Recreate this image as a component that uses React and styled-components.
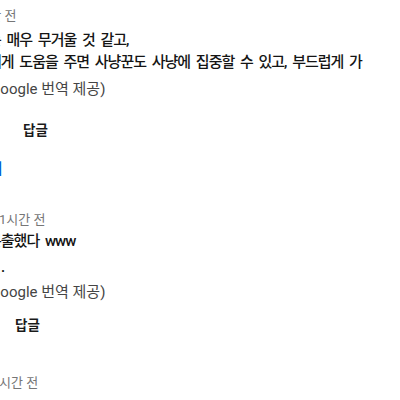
import React from 'react'
import styled, { createGlobalStyle } from 'styled-components'

const GlobalStyle = createGlobalStyle`
  html, body {
    margin: 0;
    padding: 0;
    background: #ffffff;
  }
  body {
    overflow: hidden;
    font-family: Roboto, "Noto Sans CJK KR", sans-serif;
  }
`

const Thread = styled.div`
  width: 400px;
  height: 400px;
  overflow: hidden;
  display: flex;
  flex-direction: column;
  padding-top: 6px;
  box-sizing: border-box;
`

const Comment = styled.div`
  display: flex;
  flex-direction: column;
  flex-shrink: 0;
  margin-top: ${p => p.$top || 0}px;
`

const Meta = styled.div`
  font-size: 13px;
  line-height: 20px;
  color: #767676;
  white-space: nowrap;
  margin-left: ${p => p.$shift}px;
`

const Body = styled.div`
  font-size: 15px;
  font-weight: 500;
  letter-spacing: -1px;
  word-spacing: 3px;
  line-height: ${p => p.$lh || 22}px;
  color: #151515;
  white-space: nowrap;
  margin-top: ${p => p.$top}px;
  margin-left: -12px;
`

const Line = styled.div`
  padding-left: ${p => p.$indent || 0}px;
`

const Translated = styled.div`
  font-size: 15px;
  line-height: 20px;
  color: #454545;
  white-space: nowrap;
  margin-top: ${p => p.$top}px;
  margin-left: -15px;
`

const Actions = styled.div`
  display: flex;
  align-items: center;
  height: 36px;
  margin-top: ${p => p.$top}px;
  padding-left: ${p => p.$indent}px;
`

const ReplyButton = styled.button`
  border: 0;
  background: none;
  padding: 0;
  font-family: Roboto, "Noto Sans CJK KR", sans-serif;
  font-size: 13.5px;
  font-weight: 700;
  line-height: 18px;
  color: #1a1a1a;
`

const RepliesToggle = styled.div`
  display: flex;
  align-items: center;
  height: 36px;
  margin-top: ${p => p.$top}px;
  margin-left: -11.5px;
  font-size: 15px;
  font-weight: 700;
  color: #065fd4;
  white-space: nowrap;
`

export default function App() {
  return (
    <>
      <GlobalStyle />
      <Thread>
        <Comment>
          <Meta $shift={-30}>1시간 전</Meta>
          <Body $top={3}>
            <Line>는 매우 무거울 것 같고,</Line>
            <Line>에게 도움을 주면 사냥꾼도 사냥에 집중할 수 있고, 부드럽게 가</Line>
          </Body>
          <Translated $top={6}>(Google 번역 제공)</Translated>
          <Actions $top={13} $indent={23}>
            <ReplyButton>답글</ReplyButton>
          </Actions>
          <RepliesToggle $top={1}>개</RepliesToggle>
        </Comment>

        <Comment $top={25}>
          <Meta $shift={-1}>1시간 전</Meta>
          <Body $top={-2} $lh={26}>
            <Line>분출했다 www</Line>
            <Line $indent={13}>.</Line>
          </Body>
          <Translated $top={2}>(Google 번역 제공)</Translated>
          <Actions $top={5} $indent={15}>
            <ReplyButton>답글</ReplyButton>
          </Actions>
        </Comment>

        <Comment $top={30}>
          <Meta $shift={-1}>시간 전</Meta>
        </Comment>
      </Thread>
    </>
  )
}
